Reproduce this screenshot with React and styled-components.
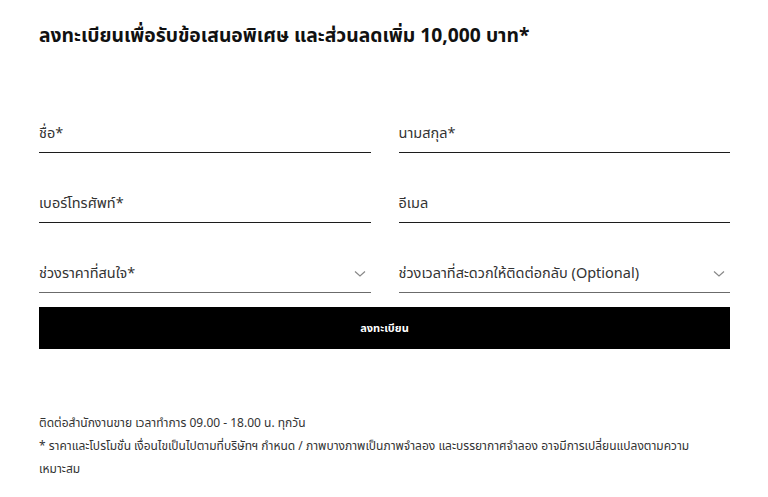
import React from "react";
import styled, { createGlobalStyle } from "styled-components";

const Global = createGlobalStyle`
  html, body { margin: 0; padding: 0; background: #fff; }
  body { font-family: "Noto Sans", "Noto Sans Thai", sans-serif; color: #222; }
  * { box-sizing: border-box; }
`;

const Page = styled.div`
  width: 768px;
  padding: 20px 38px 0 39px;
`;

const Title = styled.h2`
  margin: 0;
  font-size: 19.3px;
  line-height: 30px;
  font-weight: 700;
  color: #111;
`;

const Form = styled.form`
  margin-top: 62px;
  display: grid;
  grid-template-columns: 1fr 1fr;
  column-gap: 28px;
  row-gap: 29px;
`;

const Field = styled.div`
  height: 41px;
  display: flex;
  align-items: center;
  justify-content: space-between;
  border-bottom: 1px solid ${(p) => (p.$select ? "#6b6b6b" : "#1c1c1c")};
  padding-top: 3px;
`;

const Label = styled.span`
  font-size: 14.5px;
  color: #333;
`;

const Chevron = styled.svg`
  width: 12px;
  height: 8px;
  margin-right: 5px;
`;

const Submit = styled.button`
  grid-column: 1 / span 2;
  margin-top: -15px;
  height: 42px;
  border: none;
  background: #000;
  color: #fff;
  font-family: inherit;
  font-size: 11px;
  font-weight: 700;
  cursor: pointer;
`;

const Footer = styled.div`
  margin-top: 62px;
  font-size: 12px;
  line-height: 23px;
  color: #333;
`;

const Line = styled.p`
  margin: 0;
`;

const NoWrap = styled.span`
  white-space: nowrap;
`;

function Select({ label }) {
  return (
    <Field $select>
      <Label>{label}</Label>
      <Chevron viewBox="0 0 12 8" fill="none">
        <path d="M1 1.5 L6 6 L11 1.5" stroke="#888" strokeWidth="1.2" />
      </Chevron>
    </Field>
  );
}

export default function App() {
  return (
    <>
      <Global />
      <Page>
        <Title>ลงทะเบียนเพื่อรับข้อเสนอพิเศษ และส่วนลดเพิ่ม 10,000 บาท*</Title>
        <Form onSubmit={(e) => e.preventDefault()}>
          <Field><Label>ชื่อ*</Label></Field>
          <Field><Label>นามสกุล*</Label></Field>
          <Field><Label>เบอร์โทรศัพท์*</Label></Field>
          <Field><Label>อีเมล</Label></Field>
          <Select label="ช่วงราคาที่สนใจ*" />
          <Select label="ช่วงเวลาที่สะดวกให้ติดต่อกลับ (Optional)" />
          <Submit type="submit">ลงทะเบียน</Submit>
        </Form>
        <Footer>
          <Line>ติดต่อสำนักงานขาย เวลาทำการ 09.00 - 18.00 น. ทุกวัน</Line>
          <Line>
            * ราคาและโปรโมชั่น เงื่อนไขเป็นไปตามที่บริษัทฯ กำหนด / ภาพบางภาพเป็นภาพจำลอง และบรรยากาศจำลอง อาจมีการเปลี่ยนแปลงตามความ<NoWrap>เหมาะสม</NoWrap>
          </Line>
        </Footer>
      </Page>
    </>
  );
}
